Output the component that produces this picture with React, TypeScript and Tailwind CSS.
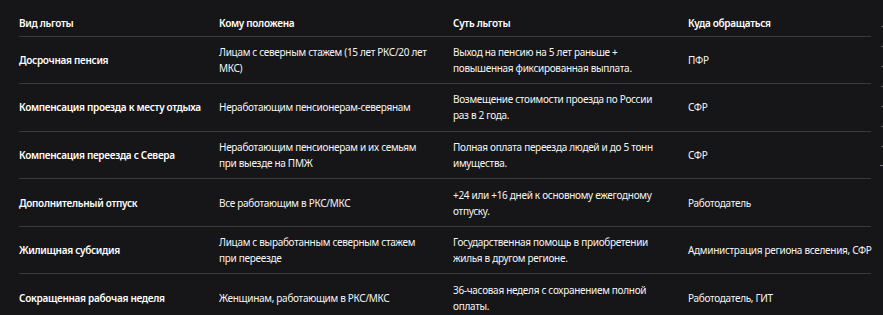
const rows = [
  {
    kind: "Досрочная пенсия",
    who: "Лицам с северным стажем (15 лет РКС/20 лет МКС)",
    what: "Выход на пенсию на 5 лет раньше + повышенная фиксированная выплата.",
    where: "ПФР",
  },
  {
    kind: "Компенсация проезда к месту отдыха",
    who: "Неработающим пенсионерам-северянам",
    what: "Возмещение стоимости проезда по России раз в 2 года.",
    where: "СФР",
  },
  {
    kind: "Компенсация переезда с Севера",
    who: "Неработающим пенсионерам и их семьям при выезде на ПМЖ",
    what: "Полная оплата переезда людей и до 5 тонн имущества.",
    where: "СФР",
  },
  {
    kind: "Дополнительный отпуск",
    who: "Все работающим в РКС/МКС",
    what: "+24 или +16 дней к основному ежегодному отпуску.",
    where: "Работодатель",
  },
  {
    kind: "Жилищная субсидия",
    who: "Лицам с выработанным северным стажем при переезде",
    what: "Государственная помощь в приобретении жилья в другом регионе.",
    where: "Администрация региона вселения, СФР",
  },
  {
    kind: "Сокращенная рабочая неделя",
    who: "Женщинам, работающим в РКС/МКС",
    what: "36-часовая неделя с сохранением полной оплаты.",
    where: "Работодатель, ГИТ",
  },
];

export default function App() {
  return (
    <div
      className="relative h-[315px] w-[883px] overflow-hidden bg-[#161618] text-[10px] leading-[16px] tracking-[-0.3px] text-[#f5f5f5]"
      style={{ fontFamily: '"Noto Sans", "Open Sans", sans-serif' }}
    >
      <table className="ml-[19px] w-[852px] table-fixed border-collapse">
        <colgroup>
          <col className="w-[200px]" />
          <col className="w-[234px]" />
          <col className="w-[235px]" />
          <col className="w-[183px]" />
        </colgroup>
        <thead>
          <tr className="h-[36px] border-b border-[#3a3a3c] text-left text-white">
            <th className="pb-[5px] align-bottom font-semibold">Вид льготы</th>
            <th className="pb-[5px] align-bottom font-semibold">Кому положена</th>
            <th className="pb-[5px] align-bottom font-semibold">Суть льготы</th>
            <th className="pb-[5px] align-bottom font-semibold">Куда обращаться</th>
          </tr>
        </thead>
        <tbody>
          {rows.map((r) => (
            <tr key={r.kind} className="h-[47.6px] border-b border-[#3a3a3c] align-middle">
              <td className="font-semibold whitespace-nowrap text-white">{r.kind}</td>
              <td className="pr-[21px]">{r.who}</td>
              <td className="pr-5">{r.what}</td>
              <td className="whitespace-nowrap">{r.where}</td>
            </tr>
          ))}
        </tbody>
      </table>

      {/* scroll markers on the right edge */}
      <div className="absolute right-0 top-[26px] flex flex-col items-end gap-[19px]">
        {Array.from({ length: 7 }).map((_, i) => (
          <div key={i} className="h-px w-[2px] bg-[#5a5a5e]" />
        ))}
        <div className="-mt-[1px] h-px w-[3px] bg-[#4a7bd0]" />
      </div>
    </div>
  );
}
